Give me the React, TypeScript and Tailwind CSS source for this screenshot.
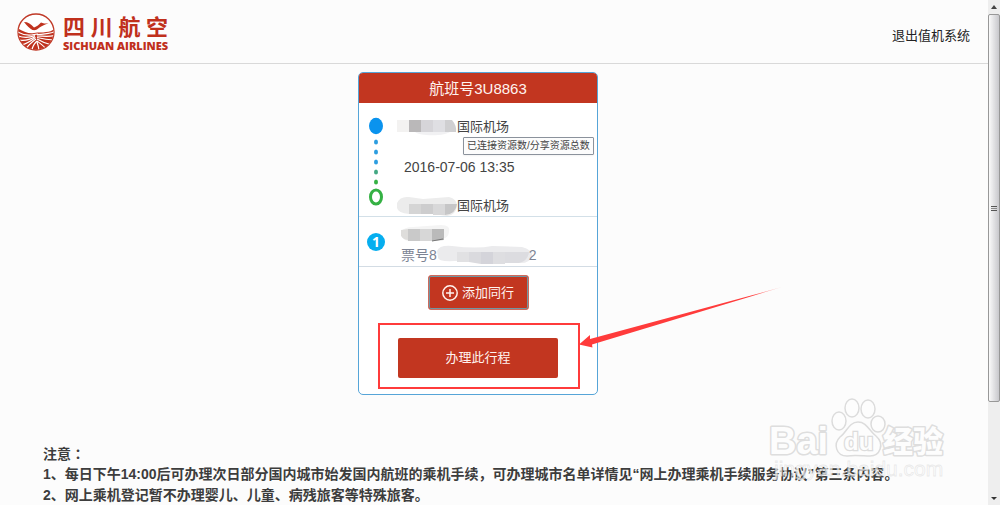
import React from "react";

const notes = [
  "1、每日下午14:00后可办理次日部分国内城市始发国内航班的乘机手续，可办理城市名单详情见“网上办理乘机手续服务协议”第三条内容。",
  "2、网上乘机登记暂不办理婴儿、儿童、病残旅客等特殊旅客。",
];

function Emblem() {
  return (
    <svg viewBox="0 0 38 38" className="size-[38px] shrink-0" aria-hidden="true">
      <defs>
        <clipPath id="disc"><circle cx="19" cy="19" r="17.6" /></clipPath>
      </defs>
      <circle cx="19" cy="19" r="18" fill="#fff" stroke="#c03a28" strokeWidth="1.3" />
      <g clipPath="url(#disc)">
        <path d="M0 15C7 19 12 21 17 20c5-1 8 0 12-1 4 0 7-2 9-4v23H0z" fill="#c0331f" />
        <g fill="none" stroke="#fff" strokeWidth="1.200">
          <path d="M0 18.500C6 22 12 23 17 21.500c2-.5 3-.5 4-.3" />
          <path d="M0 22.500C6 25 12 25 18 22.500" />
          <path d="M1 27C7 28 13 27 18 23.500" />
          <path d="M4 32C9 31 14 28 18.500 24.500" />
          <path d="M9 36C11 32 15 29 19 26" />
          <path d="M15 38C15 34 17 31 20 28" />
          <path d="M38 18.500C32 21.500 27 21 20 21.500" />
          <path d="M38 22.500C32 24 26 23 20 23" />
          <path d="M38 27C32 27 26 26 20 24.500" />
          <path d="M35 32C30 31 25 29 20 26" />
          <path d="M29 36C27 33 24 31 20 28" />
          <path d="M22 38C22 35 21 32 20 29" />
        </g>
      </g>
      <path d="M7 9c4 0 7 2 10 5.500 3-1 5-3 7-5 2 1 4 1 7.500 1-4 1-6 2-9 4-2 2-4 3-7 2.500C13 15.500 10 13 7 9z" fill="#c0331f" />
    </svg>
  );
}

function Logo() {
  return (
    <a href="#home" className="flex items-center gap-2 text-[#c0301c]">
      <Emblem />
      <span className="flex flex-col pt-1">
        <span className="flex justify-between text-[22px] leading-6 font-bold">
          <span>四</span><span>川</span><span>航</span><span>空</span>
        </span>
        <span className="font-['Open_Sans',sans-serif] text-[11px] leading-3 font-extrabold whitespace-nowrap">SICHUAN AIRLINES</span>
      </span>
    </a>
  );
}

function RouteLine() {
  return (
    <svg viewBox="0 0 16 92" className="h-[92px] w-4 shrink-0" aria-hidden="true">
      <ellipse cx="8" cy="9" rx="7" ry="8.300" fill="#0a93ee" />
      <ellipse cx="8" cy="25" rx="2" ry="2.500" fill="#2c9de0" />
      <ellipse cx="8" cy="35" rx="2" ry="2.500" fill="#2c9de0" />
      <ellipse cx="8" cy="45" rx="2" ry="2.500" fill="#2c9de0" />
      <ellipse cx="8" cy="55" rx="2" ry="2.500" fill="#43a883" />
      <ellipse cx="8" cy="65" rx="2" ry="2.500" fill="#35b144" />
      <ellipse cx="8" cy="80" rx="5.500" ry="7" fill="#fff" stroke="#35b144" strokeWidth="3" />
    </svg>
  );
}

function MaskA() {
  return (
    <svg viewBox="0 0 61 18" className="h-[18px] w-[61px] shrink-0" aria-hidden="true">
      <path d="M1 2h12v12H1z" fill="#f3f2f1" />
      <path d="M19 13h36c-3 5-30 6-36 1z" fill="#f1f1f3" />
      <path d="M13 2h12v12H13z" fill="#bab8b9" />
      <path d="M25 2h12v12H25z" fill="#d6d5d9" />
      <path d="M37 2h12v12H37z" fill="#dfdfe3" />
      <path d="M49 2h7q5 6 4 12H49z" fill="#cfcfd1" />
    </svg>
  );
}

function MaskB() {
  return (
    <svg viewBox="0 0 61 20" className="h-5 w-[61px] shrink-0" aria-hidden="true">
      <path d="M1 7q3-7 12-6l14 2 26-2q8 2 8 9-1 9-10 10l-14-2H13Q2 17 1 12z" fill="#ececec" />
      <path d="M13 8h12v10H13z" fill="#d5d5d5" />
      <path d="M25 8h12v10H25z" fill="#cdcdce" />
      <path d="M37 8h12v11H37z" fill="#d8d8d9" />
      <path d="M49 8h12q-1 10-12 11z" fill="#c6c6c7" />
    </svg>
  );
}

function MaskC() {
  return (
    <svg viewBox="0 0 50 18" className="h-[18px] w-[50px]" aria-hidden="true">
      <path d="M0 7q3-5 12-5l28-2q10 0 8 7-1 8-9 6l-18 2-14 1Q0 15 0 7z" fill="#f4f4f4" />
      <path d="M0 5q-2 9 7 10V4z" fill="#dedddb" />
      <path d="M7 4h12v12H7z" fill="#c9c9c9" />
      <path d="M19 4h12v12H19z" fill="#d7d7d7" />
      <path d="M31 4h12v11l-12 1z" fill="#bababa" />
      <path d="M31 16l11-2" stroke="#777" />
    </svg>
  );
}

function MaskD() {
  return (
    <svg viewBox="0 0 96 19" className="-mr-1 h-[19px] w-24 shrink-0" aria-hidden="true">
      <path d="M0 6Q2 0 15 1q25 3 40 0l30 1q11 3 10 9-2 8-14 7H40q-8-3-22-2Q0 17 1 12z" fill="#ebebed" />
      <path d="M20 7h12v10H20z" fill="#e1e1e3" />
      <path d="M32 7h12v12l-12-2z" fill="#dadade" />
      <path d="M44 7h12v12H44z" fill="#d4d4da" />
      <path d="M56 7h12v12H56z" fill="#dedee1" />
      <path d="M68 7h24q-1 9-10 11H68z" fill="#dcdce0" />
    </svg>
  );
}

function Pointer() {
  return (
    <svg viewBox="0 0 206 64" className="pointer-events-none absolute top-[213px] left-[220px] h-16 w-[206px]" aria-hidden="true">
      <defs>
        <linearGradient id="fade" x1="0" x2="1">
          <stop offset="0.850" stopColor="#ff3b3b" />
          <stop offset="1" stopColor="#ff3b3b" stopOpacity="0.300" />
        </linearGradient>
      </defs>
      <path d="M1 59.500L12 50v4L204 2 14 59.500l.5 3z" fill="url(#fade)" />
    </svg>
  );
}

function Watermark() {
  return (
    <svg viewBox="0 0 184 92" className="pointer-events-none absolute right-[38px] bottom-[19px] h-[92px] w-[184px]" aria-hidden="true">
      <g stroke="#dedede" strokeWidth="3" fill="#fdfdfd" strokeLinejoin="round">
        <text x="3" y="60" fontFamily="Liberation Sans, sans-serif" fontWeight="700" fontSize="38" paintOrder="stroke">Bai</text>
        <text x="117" y="58" fontFamily="Noto Sans CJK SC, sans-serif" fontWeight="900" fontSize="30" paintOrder="stroke">经验</text>
      </g>
      <g fill="#fdfdfd" stroke="#dcdcdc" strokeWidth="1.500">
        <ellipse cx="73" cy="27" rx="7" ry="9" />
        <ellipse cx="86" cy="14" rx="7" ry="9" />
        <ellipse cx="102" cy="15" rx="7" ry="9" />
        <ellipse cx="112" cy="30" rx="7" ry="8" />
        <path d="M92 28c9 0 11 9 18 14 9 8 4 20-6 20-6 0-16-1-23 0-11 0-14-12-7-19 7-5 9-15 18-15z" />
        <text x="78" y="56" fontFamily="Liberation Sans, sans-serif" fontWeight="700" fontSize="24" strokeWidth="2.500" paintOrder="stroke">du</text>
      </g>
      <text x="8" y="82" fontFamily="Liberation Sans, sans-serif" fontSize="21" fill="#fdfdfd" fillOpacity="0.650" stroke="#dcdcdc" strokeWidth="0.800" strokeOpacity="0.600">jingyan.baidu.com</text>
    </svg>
  );
}

function ScrollRail() {
  return (
    <div className="flex w-3 shrink-0 flex-col items-center bg-[#eeeeee]" aria-hidden="true">
      <svg viewBox="0 0 12 14" className="h-3.5 w-3"><path d="M3 9l3-4 3 4z" fill="#444" /></svg>
      <div className="flex w-full flex-[388] flex-col items-center justify-center gap-px rounded-xs border border-[#989898] bg-linear-to-r from-[#fafafa] to-[#c8c8cc]">
        <span className="h-px w-1.5 bg-[#555]" />
        <span className="h-px w-1.5 bg-[#888]" />
        <span className="h-px w-1.5 bg-[#555]" />
      </div>
      <div className="flex-[89]" />
      <svg viewBox="0 0 12 14" className="h-3.5 w-3"><path d="M3 6l3 3 3-3z" fill="#333" /></svg>
    </div>
  );
}

export default function App() {
  return (
    <div className="flex h-screen overflow-hidden bg-[#fcfcfc] font-['Liberation_Sans','Noto_Sans_CJK_SC',sans-serif] text-[#444]">
      <div className="relative flex min-w-0 flex-1 flex-col overflow-hidden">
        <header className="flex h-16 shrink-0 items-center justify-between border-b border-[#d9d9d9] pr-[18px] pl-[17px]">
          <Logo />
          <a href="#exit" className="pt-2 text-[13px] leading-5 text-[#222]">退出值机系统</a>
        </header>
        <main>
          <section className="relative mx-auto mt-2 w-[272px] pr-8">
            <div className="overflow-hidden rounded-[5px] border border-[#56a5d8] bg-white">
              <h1 className="bg-[#c23620] pt-1 pb-[3px] text-center text-[15px] leading-[23px] text-[#fff3ef]">航班号3U8863</h1>
              <div className="flex h-[114px] items-start gap-3 border-b border-[#d3e0e8] pt-[14px] pl-[9px]">
                <RouteLine />
                <div className="flex h-[99px] flex-col justify-between">
                  <p className="flex items-center text-[13px] leading-5"><MaskA />国际机场</p>
                  <time className="pl-2 text-[14px] leading-5">2016-07-06 13:35</time>
                  <p className="flex items-center text-[13px] leading-5"><MaskB />国际机场</p>
                </div>
              </div>
              <div className="flex h-[50px] items-center gap-4 border-b border-[#d3dce4] pl-2">
                <span className="flex size-[18px] shrink-0 items-center justify-center rounded-full bg-[#06aeef] font-['Open_Sans',sans-serif] text-[14px] leading-4 font-bold text-white">1</span>
                <div className="pt-2">
                  <MaskC />
                  <p className="flex items-center text-[14px] leading-6 text-[#7d8494]">票号8<MaskD />2</p>
                </div>
              </div>
              <div className="flex flex-col items-center px-[39px] pt-2 pb-4">
                <button type="button" className="flex h-[35px] w-[101px] items-center justify-center gap-1 rounded-[3px] border border-[#cf6a5c] bg-[#c23620] text-[13px] text-[#fff3ef] inset-ring inset-ring-[#6f96a3]">
                  <svg viewBox="0 0 16 16" className="size-4" fill="none" stroke="currentColor" strokeWidth="1.500" aria-hidden="true">
                    <circle cx="8" cy="8" r="7.200" /><path d="M8 4v8M4 8h8" />
                  </svg>
                  添加同行
                </button>
                <button type="button" className="mt-7 h-10 w-full rounded-xs bg-[#c23620] text-[13px] text-[#fff3ef]">办理此行程</button>
              </div>
            </div>
            <div role="tooltip" className="absolute top-[65px] left-[105px] rounded-[1px] border border-[#8b929c] bg-[#fcfcfc] px-[3px] text-[10px] leading-4 whitespace-nowrap text-[#444] shadow-xs">已连接资源数/分享资源总数</div>
            <div className="pointer-events-none absolute top-[251px] left-[20px] h-[66px] w-[202px] border-2 border-[#ff3b3b]" />
            <Pointer />
          </section>
          <section className="mt-12 pr-3 pl-[43px] text-[14px] leading-[21px] font-bold text-[#3d3d3d]">
            <h2 className="font-['Noto_Sans_CJK_TC',sans-serif]">注意：</h2>
            {notes.map((note) => <p key={note} className="whitespace-nowrap">{note}</p>)}
          </section>
        </main>
        <Watermark />
      </div>
      <ScrollRail />
    </div>
  );
}
